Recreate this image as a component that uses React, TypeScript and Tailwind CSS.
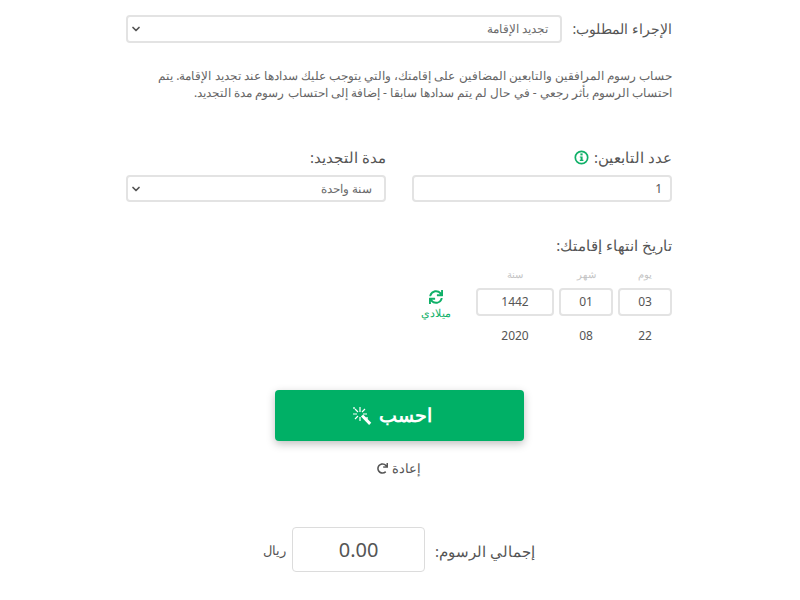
import { FaRedo, FaSync } from "react-icons/fa";
import { ChevronDown } from "lucide-react";

const FONT = "font-['Noto_Sans','Open_Sans',sans-serif]";

function SelectBox({ value, className }: { value: string; className: string }) {
  return (
    <div className={`relative flex items-center rounded border-2 border-[#e3e3e3] bg-white pr-[12px] text-[12px] text-[#6b6b6b] ${className}`}>
      <span>{value}</span>
      <ChevronDown size={12} strokeWidth={3.5} className="absolute left-[2px] top-[6px] text-[#555]" />
    </div>
  );
}

function DateBox({ value, label, alt, width }: { value: string; label: string; alt: string; width: string }) {
  return (
    <div className={`flex flex-col items-center ${width}`}>
      <div className="h-[22px] text-[10px] leading-[17px] text-[#c4c4c4]">{label}</div>
      <div className="flex h-[28px] w-full items-center justify-center rounded border-2 border-[#e3e3e3] text-[12px] text-[#555]">{value}</div>
      <div className="mt-[11px] text-[12px] leading-[17px] text-[#555]">{alt}</div>
    </div>
  );
}

function InfoIcon() {
  return (
    <svg width="15" height="15" viewBox="0 0 15 15" className="text-[#10b068]">
      <circle cx="7.5" cy="7.5" r="6.2" fill="none" stroke="currentColor" strokeWidth="1.7" />
      <rect x="6.4" y="3.4" width="2.2" height="2" fill="currentColor" />
      <path d="M5.8 6.4h2.8v3.3h.8v1.2H5.8V9.7h.8V7.6h-.8z" fill="currentColor" />
    </svg>
  );
}

function WandIcon() {
  return (
    <svg width="20" height="20" viewBox="0 0 20 20" fill="none" stroke="white">
      <path d="M10 9.5l8.2 8.4" strokeWidth="3" />
      <path d="M8 1v5M8 11v4M1 8h4M11 8h4M3 3l3 3M13 3l-3 3M3 13l3-3" strokeWidth="1.2" />
      <path d="M2 1v2M1 2h2M15 11v2M14 12h2" strokeWidth="0.8" />
    </svg>
  );
}

export default function App() {
  return (
    <div dir="rtl" className={`${FONT} h-[600px] w-[800px] overflow-hidden bg-white pl-[126px] pr-[128px] pt-[15px] text-[#555]`}>
      <div className="flex items-center gap-[12px]">
        <label className="w-[98px] shrink-0 whitespace-nowrap text-[14px] leading-[28px]">الإجراء المطلوب:</label>
        <SelectBox value="تجديد الإقامة" className="h-[28px] flex-1" />
      </div>

      <p className="mt-[24px] text-[12px] leading-[17px] text-[#666]">
        حساب رسوم المرافقين والتابعين المضافين على إقامتك، والتي يتوجب عليك سدادها عند تجديد الإقامة. يتم احتساب الرسوم بأثر رجعي - في حال لم يتم سدادها سابقا - إضافة إلى احتساب رسوم مدة التجديد.
      </p>

      <div className="mt-[46px] flex gap-[26px]">
        <div className="w-[260px]">
          <div className="flex h-[21px] items-center gap-[5px] text-[15px]">
            <span>عدد التابعين:</span>
            <InfoIcon />
          </div>
          <div className="mt-[7px] flex h-[27px] items-center rounded border-2 border-[#e3e3e3] pr-[8px] text-[12px]">1</div>
        </div>
        <div className="w-[260px]">
          <div className="h-[21px] text-[15px] leading-[21px]">مدة التجديد:</div>
          <SelectBox value="سنة واحدة" className="mt-[7px] h-[27px]" />
        </div>
      </div>

      <div className="mt-[33px] text-[15px] leading-[21px]">تاريخ انتهاء إقامتك:</div>

      <div className="mt-[10px] flex gap-[5px]">
        <DateBox value="03" label="يوم" alt="22" width="w-[54px]" />
        <DateBox value="01" label="شهر" alt="08" width="w-[54px]" />
        <DateBox value="1442" label="سنة" alt="2020" width="w-[78px]" />
        <div className="mr-[20px] mt-[24px] flex w-[30px] flex-col items-center text-[#10b068]">
          <FaSync size={14} />
          <span className="mt-[2px] whitespace-nowrap text-[11px] leading-[14px]">ميلادي</span>
        </div>
      </div>

      <div className="mt-[46px] flex justify-center">
        <button className="flex h-[51px] w-[249px] items-center justify-center gap-[7px] rounded bg-[#00b066] pr-[14px] text-[19px] font-bold text-white shadow-[0_3px_8px_rgba(0,0,0,0.25)]">
          <span>احسب</span>
          <WandIcon />
        </button>
      </div>

      <div className="mt-[18px] flex items-center justify-center gap-[4px] text-[13px] leading-[18px]">
        <span>إعادة</span>
        <FaRedo size={11} />
      </div>

      <div className="mt-[50px] flex items-center justify-center gap-[10px]">
        <span className="mt-[3px] whitespace-nowrap text-[15px]">إجمالي الرسوم:</span>
        <div className="flex h-[45px] w-[133px] items-center justify-center rounded border border-[#dcdcdc] text-[20px]">0.00</div>
        <span className="-mr-[4px] mt-[3px] text-[13px]">ريال</span>
      </div>
    </div>
  );
}
